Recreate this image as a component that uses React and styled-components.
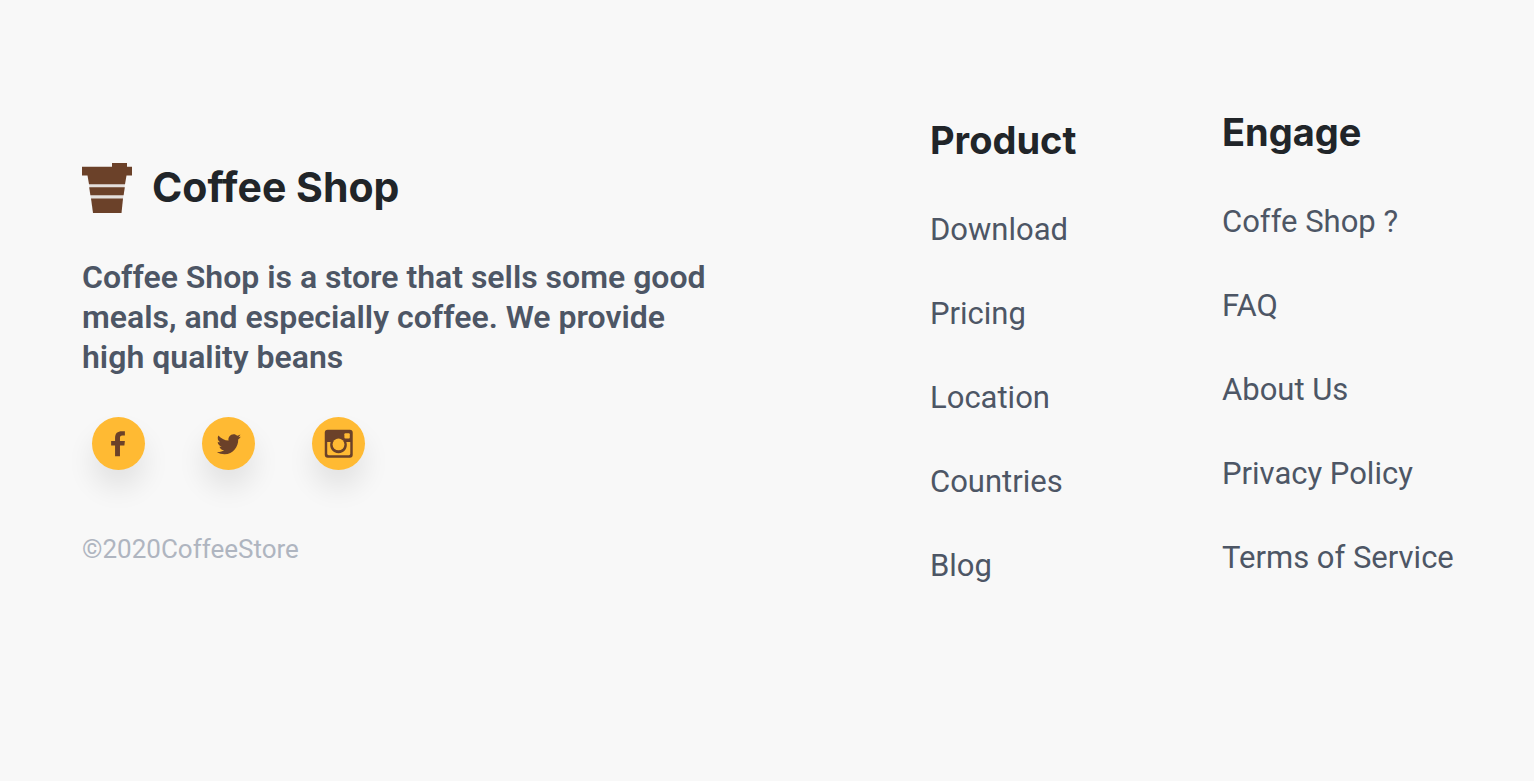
import React from "react";
import styled, { createGlobalStyle } from "styled-components";

const GlobalStyle = createGlobalStyle`
  *, *::before, *::after { box-sizing: border-box; }
  body {
    margin: 0;
    background: #f8f8f8;
    color: #4d5665;
    font-family: Roboto, "Open Sans", sans-serif;
  }
`;

const Footer = styled.footer`
  display: flex;
  justify-content: space-between;
  align-items: flex-start;
  padding: 109px 80px 80px 82px;
`;

const Brand = styled.section`
  flex: 0 1 640px;
  padding-top: 54px;
`;

const BrandRow = styled.div`
  display: flex;
  align-items: flex-start;
  gap: 20px;
  height: 50px;
`;

const BrandName = styled.h1`
  margin: 0;
  color: #212529;
  font: 700 41px/48px Inter, sans-serif;
`;

const Description = styled.p`
  margin: 44px 0 0;
  font-size: 32px;
  font-weight: 600;
  line-height: 40px;
`;

const SocialList = styled.ul`
  display: flex;
  gap: 57px;
  margin: 40px 0 0;
  padding: 0 10px;
  list-style: none;
`;

const SocialLink = styled.a`
  display: block;
  width: 53px;
  height: 53px;
  border-radius: 50%;
  background: #ffba33;
  box-shadow: 0 18px 28px rgba(0, 0, 0, 0.09);
  color: #6b4129;

  svg { display: block; }
`;

const Copyright = styled.p`
  margin: 63px 0 0;
  color: #afb5c0;
  font-size: 26px;
  line-height: 32px;
`;

const Nav = styled.nav`
  display: grid;
  grid-template-columns: 232px 232px;
  gap: 60px;
`;

const Column = styled.div`
  padding-top: ${({ $lowered }) => ($lowered ? "8px" : "0")};
  white-space: nowrap;
`;

const ColumnTitle = styled.h2`
  margin: 0 0 47px;
  color: #212529;
  font: 700 38px/46px Inter, sans-serif;
`;

const LinkList = styled.ul`
  display: grid;
  gap: 44px;
  margin: 0;
  padding: 0;
  list-style: none;
`;

const FooterLink = styled.a`
  display: block;
  color: inherit;
  font-size: 31px;
  line-height: 40px;
  text-decoration: none;
`;

const CupLogo = () => (
  <svg width="50" height="50" viewBox="0 0 50 50" fill="#6b4129" aria-hidden="true">
    <path d="M7 20.500H43L41 36H9Z" fill="#e4dfdc" />
    <path d="M0 3.700H30V0H45V3.700H50V12.400H44.500L43 21.200H7L5.500 12.400H0Z" />
    <path d="M7.200 24.200H42.800L41.600 32.200H8.400Z" />
    <path d="M9 35.500H41L39.500 50H11Z" />
  </svg>
);

const FacebookIcon = () => (
  <svg width="53" height="53" viewBox="0 0 54 54" aria-hidden="true">
    <path
      fill="currentColor"
      d="M23.500 40V29H19.500V24.500H23.500V21.500C23.500 16.500 26 14.500 30.500 14.500H33.500V18.800H31C29 18.800 28.500 19.700 28.500 21.500V24.500H33.500L33 29H28.500V40Z"
    />
  </svg>
);

const TwitterIcon = () => (
  <svg width="53" height="53" viewBox="0 0 54 54" aria-hidden="true">
    <path
      fill="currentColor"
      transform="translate(15 15.500)"
      d="M24.500 4.600a10 10 0 0 1-2.600 2.700C22.100 14.400 16.800 22.500 8 22.500c-2.900 0-5.600-.8-7.800-2.300 2.600.3 5.300-.4 7.300-2-2.300 0-4.100-1.500-4.800-3.500.8.2 1.600.1 2.300-.1-2.300-.6-4-2.600-4-5 .7.400 1.500.6 2.300.6C1 8.600.4 5.600 1.700 3.300c2.600 3.100 6.200 5 10.400 5.200-.8-3.300 1.700-6.500 5.100-6.500 1.500 0 2.800.6 3.700 1.600 1.200-.2 2.300-.7 3.200-1.200-.4 1.200-1.200 2.200-2.200 2.800.9-.1 1.800-.3 2.600-.6Z"
    />
  </svg>
);

const InstagramIcon = () => (
  <svg width="53" height="53" viewBox="0 0 54 54" aria-hidden="true">
    <rect x="13" y="13" width="28.500" height="28.500" rx="3" fill="currentColor" />
    <path d="M15.500 25.500H19a8.500 8.500 0 1 0 16 0h4v12a1.500 1.500 0 0 1-1.500 1.500H17a1.500 1.500 0 0 1-1.500-1.500Z" fill="#ffba33" />
    <circle cx="27" cy="28" r="6" fill="#ffba33" />
    <rect x="33" y="16.500" width="5.500" height="5.500" rx="1" fill="#ffba33" />
  </svg>
);

const socials = [
  { name: "Facebook", Icon: FacebookIcon },
  { name: "Twitter", Icon: TwitterIcon },
  { name: "Instagram", Icon: InstagramIcon },
];

const columns = [
  { title: "Product", lowered: true, links: ["Download", "Pricing", "Location", "Countries", "Blog"] },
  { title: "Engage", lowered: false, links: ["Coffe Shop ?", "FAQ", "About Us", "Privacy Policy", "Terms of Service"] },
];

export default function App() {
  return (
    <>
      <GlobalStyle />
      <Footer>
        <Brand>
          <BrandRow>
            <CupLogo />
            <BrandName>Coffee Shop</BrandName>
          </BrandRow>
          <Description>
            Coffee Shop is a store that sells some good meals, and especially coffee. We provide high quality beans
          </Description>
          <SocialList>
            {socials.map(({ name, Icon }) => (
              <li key={name}>
                <SocialLink href="#" aria-label={name}>
                  <Icon />
                </SocialLink>
              </li>
            ))}
          </SocialList>
          <Copyright>©2020CoffeeStore</Copyright>
        </Brand>
        <Nav aria-label="Footer">
          {columns.map(({ title, lowered, links }) => (
            <Column key={title} $lowered={lowered}>
              <ColumnTitle>{title}</ColumnTitle>
              <LinkList>
                {links.map((label) => (
                  <li key={label}>
                    <FooterLink href="#">{label}</FooterLink>
                  </li>
                ))}
              </LinkList>
            </Column>
          ))}
        </Nav>
      </Footer>
    </>
  );
}
